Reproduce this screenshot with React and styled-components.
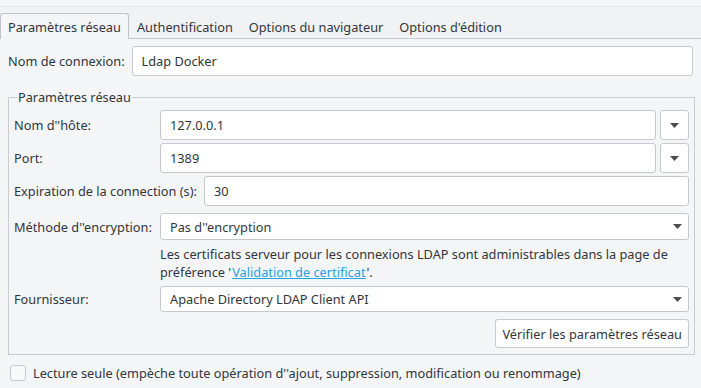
import React from "react";
import styled, { createGlobalStyle } from "styled-components";

const Global = createGlobalStyle`
  html, body { margin: 0; padding: 0; }
  body {
    background: #f4f5f7;
    font-family: "Noto Sans", "DejaVu Sans", sans-serif;
    font-size: 12.75px;
    color: #31363b;
    width: 701px;
    height: 388px;
    overflow: hidden;
  }
`;

const TopStrip = styled.div`
  height: 6px;
  background: #f6f7f8;
  border-bottom: 1px solid #e7e8ea;
`;

const TabBar = styled.div`
  display: flex;
  align-items: flex-end;
  height: 31px;
  background: #f1f2f4;
  border-bottom: 1px solid #c4c7cb;
`;

const Tab = styled.div`
  height: 26px;
  display: flex;
  align-items: center;
  padding: 1px 7px 0;
  border: 1px solid ${(p) => (p.$active ? "#bfc3c7" : "transparent")};
  border-bottom: none;
  border-radius: 3px 3px 0 0;
  background: ${(p) => (p.$active ? "#f4f5f7" : "transparent")};
  margin-bottom: -1px;
  box-sizing: border-box;
  white-space: nowrap;
`;

const Content = styled.div`
  padding: 7px 6px 0 8px;
`;

const TopRow = styled.div`
  display: flex;
  align-items: center;
  gap: 7px;
  margin-right: 2px;
`;

const Label = styled.div`
  white-space: nowrap;
  flex: none;
  width: ${(p) => (p.$w ? p.$w + "px" : "auto")};
`;

const Input = styled.div`
  flex: 1;
  height: ${(p) => p.$h || 28}px;
  background: #ffffff;
  border: 1px solid #c6c9cd;
  border-radius: 3px;
  display: flex;
  align-items: center;
  padding: 0 9px;
  color: #31363b;
  white-space: nowrap;
`;

const Group = styled.fieldset`
  margin: 14px 0 0 0;
  padding: 6px 5px 6px 5px;
  border: 1px solid #c8cbcf;
  min-width: 0;
`;

const Legend = styled.legend`
  padding: 0 1px;
  margin-left: 3px;
  line-height: 14px;
`;

const Row = styled.div`
  display: flex;
  align-items: center;
  gap: ${(p) => p.$gap ?? 4}px;
  margin-top: ${(p) => p.$mt ?? 3}px;
`;

const DropButton = styled.div`
  width: 27px;
  height: 28px;
  flex: none;
  background: #fff;
  border: 1px solid #c6c9cd;
  border-radius: 3px;
  display: flex;
  align-items: center;
  justify-content: center;
`;

const Select = styled(Input)`
  justify-content: space-between;
  padding-right: 6px;
`;

const Arrow = () => (
  <svg width="9" height="5" viewBox="0 0 9 5">
    <path d="M0 0 H9 L4.5 5 Z" fill="#4d4d4d" />
  </svg>
);

const Info = styled.div`
  margin: 6px 0 0 146px;
  line-height: 17.5px;
`;

const InfoLine = styled.div`
  white-space: nowrap;
`;

const Link = styled.a`
  color: #22a3e2;
  text-decoration: underline;
  margin: 0 1px;
`;

const ButtonRow = styled.div`
  display: flex;
  justify-content: flex-end;
  margin-top: 7px;
`;

const Button = styled.div`
  height: 27px;
  padding: 0 6px;
  background: #fff;
  border: 1px solid #c6c9cd;
  border-radius: 3px;
  display: flex;
  align-items: center;
  white-space: nowrap;
`;

const CheckRow = styled.div`
  display: flex;
  align-items: center;
  gap: 7px;
  margin: 9px 0 0 2px;
`;

const Box = styled.div`
  width: 14px;
  height: 14px;
  border: 1px solid #c6c9cd;
  border-radius: 3px;
  background: #f8f9fa;
`;

export default function App() {
  return (
    <>
      <Global />
      <TopStrip />
      <TabBar>
        <Tab $active>Paramètres réseau</Tab>
        <Tab>Authentification</Tab>
        <Tab>Options du navigateur</Tab>
        <Tab>Options d'édition</Tab>
      </TabBar>
      <Content>
        <TopRow>
          <Label>Nom de connexion:</Label>
          <Input>Ldap Docker</Input>
        </TopRow>
        <Group>
          <Legend>Paramètres réseau</Legend>
          <Row $mt={0}>
            <Label $w={142}>Nom d''hôte:</Label>
            <Input>127.0.0.1</Input>
            <DropButton><Arrow /></DropButton>
          </Row>
          <Row>
            <Label $w={142}>Port:</Label>
            <Input>1389</Input>
            <DropButton><Arrow /></DropButton>
          </Row>
          <Row $gap={7}>
            <Label>Expiration de la connection (s):</Label>
            <Input>30</Input>
          </Row>
          <Row $mt={7}>
            <Label $w={142}>Méthode d''encryption:</Label>
            <Select $h={25}>Pas d''encryption<Arrow /></Select>
          </Row>
          <Info>
            <InfoLine>Les certificats serveur pour les connexions LDAP sont administrables dans la page de</InfoLine>
            <InfoLine>
              <span>préférence '</span><Link>Validation de certificat</Link><span>'.</span>
            </InfoLine>
          </Info>
          <Row $mt={5}>
            <Label $w={142}>Fournisseur:</Label>
            <Select $h={24}>Apache Directory LDAP Client API<Arrow /></Select>
          </Row>
          <ButtonRow>
            <Button>Vérifier les paramètres réseau</Button>
          </ButtonRow>
        </Group>
        <CheckRow>
          <Box />
          <span>Lecture seule (empèche toute opération d''ajout, suppression, modification ou renommage)</span>
        </CheckRow>
      </Content>
    </>
  );
}
